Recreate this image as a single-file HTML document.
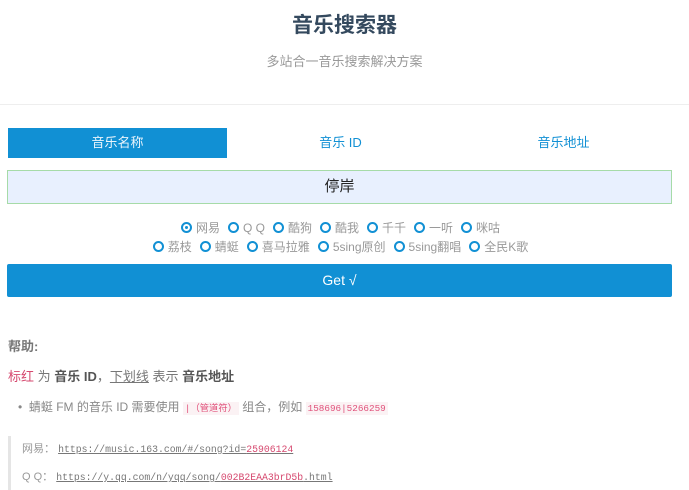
<!DOCTYPE html>
<html><head><meta charset="utf-8"><style>
*{margin:0;padding:0;box-sizing:border-box}
body{width:689px;height:490px;overflow:hidden;background:#fff;font-family:"Liberation Sans","Noto Sans CJK SC",sans-serif;color:#555;position:relative}
.a{position:absolute}
h1{position:absolute;top:9px;left:0;width:689px;text-align:center;font-size:21px;color:#34495e;font-weight:bold}
.sub{top:51px;left:0;width:689px;text-align:center;font-size:13px;color:#999}
.hr{top:104px;left:0;width:689px;height:1px;background:#eee}
.tab{top:128px;height:30px;line-height:30px;text-align:center;font-size:13px;color:#1190d4}
.inp{top:170px;left:7px;width:665px;height:34px;background:#e8f0fe;border:1px solid #a6dba8;text-align:center;line-height:32px;font-size:15px;color:#222}
.row{left:0;width:689px;text-align:center;font-size:12px;color:#999;white-space:nowrap}
.r{display:inline-block;margin:0 4px}
.r i{display:inline-block;width:11px;height:11px;border:2px solid #1190d4;border-radius:50%;vertical-align:-1px;margin-right:4px;position:relative}
.r i.on:after{content:"";position:absolute;left:2px;top:2px;width:3px;height:3px;border-radius:50%;background:#1190d4}
.btn{top:264px;left:7px;width:665px;height:33px;background:#1190d4;color:#fff;text-align:center;line-height:33px;font-size:14px;border-radius:2px}
code{font-family:"Liberation Mono","Noto Sans CJK SC",monospace;font-size:9.3px;color:#e0507a;background:#fbf2f4;padding:1px 2px}
.lk{font-family:'Liberation Mono',monospace;font-size:9.8px;color:#777;text-decoration:underline}
</style></head><body>
<h1>音乐搜索器</h1>
<div class="a sub">多站合一音乐搜索解决方案</div>
<div class="a hr"></div>
<div class="a tab" style="left:8px;width:219px;background:#1190d4;color:#eaf4fb">音乐名称</div>
<div class="a tab" style="left:231px;width:219px">音乐 ID</div>
<div class="a tab" style="left:454px;width:219px">音乐地址</div>
<div class="a inp">停岸</div>
<div class="a row" style="top:219px;left:-4px"><span class="r"><i class="on"></i>网易</span><span class="r"><i></i>Q Q</span><span class="r"><i></i>酷狗</span><span class="r"><i></i>酷我</span><span class="r"><i></i>千千</span><span class="r"><i></i>一听</span><span class="r"><i></i>咪咕</span></div>
<div class="a row" style="top:238px;left:-4px"><span class="r"><i></i>荔枝</span><span class="r"><i></i>蜻蜓</span><span class="r"><i></i>喜马拉雅</span><span class="r"><i></i>5sing原创</span><span class="r"><i></i>5sing翻唱</span><span class="r"><i></i>全民K歌</span></div>
<div class="a btn">Get √</div>
<div class="a" style="top:336px;left:8px;font-size:13px;font-weight:bold;color:#777">帮助:</div>
<div class="a" style="top:366px;left:8px;font-size:13px;color:#777"><span style="color:#d6496f">标红</span> 为 <b style="color:#555">音乐 ID</b>，<u>下划线</u> 表示 <b style="color:#555">音乐地址</b></div>
<div class="a" style="top:398px;left:18px;font-size:12px;color:#888">•&nbsp; 蜻蜓 FM 的音乐 ID 需要使用 <code>|（管道符）</code> 组合，例如 <code>158696|5266259</code></div>
<div class="a" style="top:436px;left:8px;width:3px;height:54px;background:#e5e5e5"></div>
<div class="a" style="top:440px;left:22px;font-size:11px;color:#999">网易： <span class="lk">https://music.163.com/#/song?id=<span style="color:#d6496f">25906124</span></span></div>
<div class="a" style="top:468px;left:22px;font-size:11px;color:#999">Q Q： <span class="lk">https://y.qq.com/n/yqq/song/<span style="color:#d6496f">002B2EAA3brD5b</span>.html</span></div>
</body></html>
